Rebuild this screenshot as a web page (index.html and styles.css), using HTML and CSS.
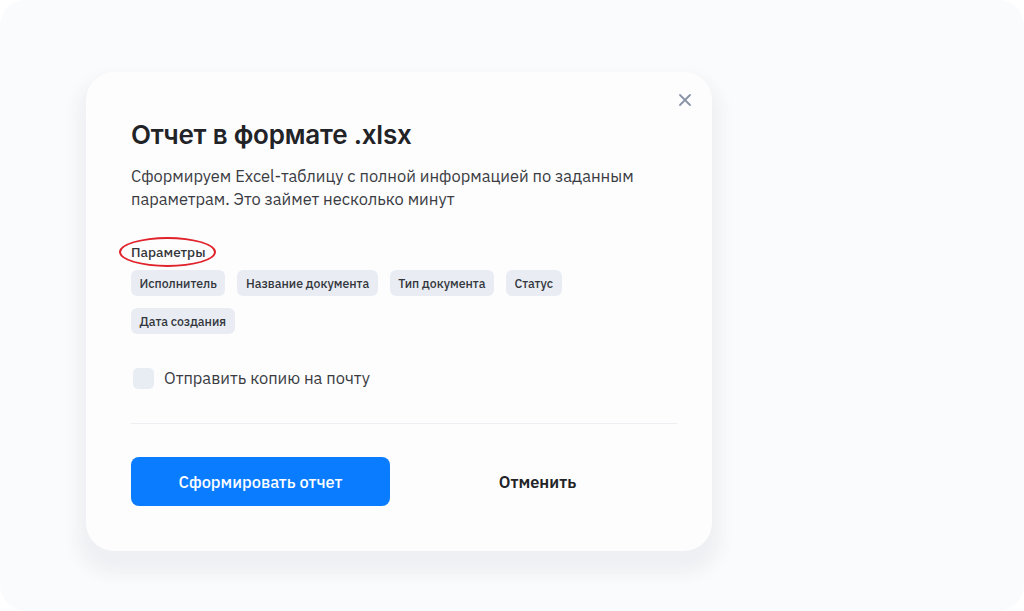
FILE: index.html
```html
<!DOCTYPE html>
<html>
<head>
    <title>Отчет в формате .xlsx</title>
    <link rel="stylesheet" href="styles.css">
</head>
<body>
    <div class="screen">
        <div class="modal">
            <button class="close-btn" aria-label="Закрыть">
                <svg width="14" height="14" viewBox="0 0 14 14">
                    <path d="M2 2 L12 12 M12 2 L2 12" stroke="#8a93a6" stroke-width="1.8" stroke-linecap="round"/>
                </svg>
            </button>

            <h1 class="modal-title">Отчет в формате .xlsx</h1>
            <p class="modal-text">Сформируем Excel-таблицу с полной информацией по заданным параметрам. Это займет несколько минут</p>

            <div class="params-label">
                <span>Параметры</span>
                <!-- annotation -->
                <span class="mark"></span>
            </div>
            <div class="chips">
                <span class="chip">Исполнитель</span>
                <span class="chip">Название документа</span>
                <span class="chip">Тип документа</span>
                <span class="chip">Статус</span>
                <span class="chip">Дата создания</span>
            </div>

            <label class="check-row">
                <span class="checkbox"></span>
                Отправить копию на почту
            </label>

            <div class="divider"></div>

            <div class="actions">
                <button class="primary-btn">Сформировать отчет</button>
                <button class="cancel-btn">Отменить</button>
            </div>
        </div>
    </div>
</body>
</html>
```

FILE: styles.css
```css
html, body {
    margin: 0;
    height: 100%;
    background: #ffffff;
}
body {
    font-family: "IBM Plex Sans", Roboto, "Noto Sans", sans-serif;
    color: #2b2d33;
}
.screen {
    height: 611px;
    box-sizing: border-box;
    background: #fafbfc;
    border-radius: 26px;
    padding: 72px 0 0 86px;
}
.modal {
    position: relative;
    width: 626px;
    box-sizing: border-box;
    background: #fdfdfe;
    border-radius: 28px;
    padding: 47px 35px 45px 45px;
    box-shadow: 0 14px 16px 9px rgba(40, 60, 100, 0.055);
}
.close-btn {
    position: absolute;
    top: 21px;
    right: 20px;
    width: 14px;
    height: 14px;
    padding: 0;
    border: none;
    background: none;
    cursor: pointer;
}
.close-btn svg {
    display: block;
}
.modal-title {
    margin: 0;
    font-family: Inter, "Noto Sans", sans-serif;
    font-size: 26px;
    line-height: 32px;
    font-weight: 600;
    color: #222327;
    letter-spacing: -0.2px;
}
.modal-text {
    margin: 14px 0 0;
    font-size: 16.45px;
    line-height: 23px;
    color: #3a3c42;
    max-width: 530px;
}
.params-label {
    position: relative;
    margin-top: 32px;
    font-size: 13.6px;
    line-height: 18px;
    font-weight: 500;
    color: #333539;
}
.mark {
    position: absolute;
    left: -12px;
    top: -6px;
    width: 93px;
    height: 26px;
    border: 2px solid #e0222a;
    border-radius: 50%;
}
.chips {
    display: flex;
    flex-wrap: wrap;
    gap: 12px;
    margin-top: 9px;
    max-width: 470px;
}
.chip {
    height: 26px;
    line-height: 26px;
    padding: 0 8.5px;
    border-radius: 6px;
    background: #e9edf3;
    font-size: 12.3px;
    font-weight: 500;
    color: #33363c;
}
.check-row {
    display: flex;
    align-items: center;
    gap: 10px;
    margin-top: 34px;
    margin-left: 2px;
    font-size: 16.45px;
    line-height: 21px;
    color: #3a3c42;
}
.checkbox {
    width: 21px;
    height: 21px;
    border-radius: 5px;
    background: #e8edf4;
}
.divider {
    height: 1px;
    background: #eceef2;
    margin-top: 34px;
}
.actions {
    display: flex;
    gap: 8px;
    margin-top: 33px;
}
button {
    font-family: inherit;
    border: none;
    cursor: pointer;
}
.primary-btn {
    width: 259px;
    height: 49px;
    border-radius: 8px;
    background: #0a7cff;
    color: #ffffff;
    font-size: 16.4px;
    font-weight: 500;
}
.cancel-btn {
    flex: 1;
    height: 49px;
    background: none;
    color: #222327;
    font-size: 16.4px;
    font-weight: 600;
}
```
